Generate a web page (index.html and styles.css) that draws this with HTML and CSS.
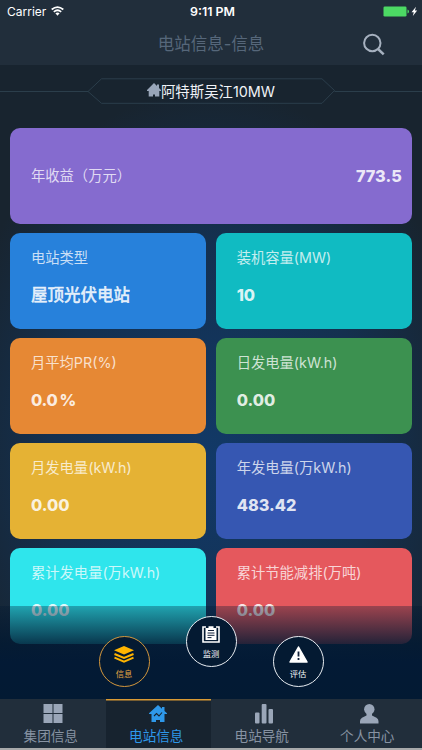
FILE: index.html
```
<!DOCTYPE html>
<html lang="zh-CN">
<head>
<meta charset="utf-8">
<meta name="viewport" content="width=device-width, initial-scale=1">
<title>电站信息</title>
<link rel="stylesheet" href="styles.css">
</head>
<body>
<div class="app">
  <header class="header">
    <div class="status">
      <div class="carrier">Carrier
        <svg width="13" height="10" viewBox="0 0 13 10"><g fill="none" stroke="#fff" stroke-width="1.7"><path d="M.7 3.5Q6.5-1.3 12.3 3.5"/><path d="M2.8 5.8Q6.5 2.7 10.2 5.8"/></g><path d="M4.4 7.3Q6.5 5.6 8.6 7.3L6.5 9.7z" fill="#fff"/></svg>
      </div>
      <div class="time">9:11 PM</div>
      <div class="power">
        <svg width="35" height="11" viewBox="0 0 35 11"><rect x=".5" y=".5" width="23" height="10" rx="1.3" fill="#4cd964"/><path d="M24.5 3.5q1.5.3 1.5 2t-1.5 2z" fill="#4cd964"/><path d="M33 .7l-4.5 5.6h2.3L29.8 10l4.4-5.4h-2.3z" fill="#fff"/></svg>
      </div>
    </div>
    <div class="titlebar">
      <h1>电站信息-信息</h1>
      <svg class="search" width="24" height="24" viewBox="0 0 24 24" fill="none" stroke="#a6b1bf"><circle cx="10.3" cy="10" r="8.2" stroke-width="2"/><path d="M16 16l5.7 5.3" stroke-width="2.5"/></svg>
    </div>
  </header>
  <main class="content">
    <div class="station">
      <svg class="frame" width="422" height="26" viewBox="0 0 422 26" fill="none" stroke="#2b3e4b"><path d="M0 13.5H88L101.5.8H322L334.500 12.500 322 25.300H101.500L88 13.500M334.500 13.500H422" stroke-width="1"/></svg>
      <svg class="home" width="14" height="14" viewBox="0 0 14 14" fill="#98a5b8"><path d="M7 0L0 7V8h1.700v5.500H6V11.500h2v2h4.300V8H14V7L12 5V1.500h-2V3z"/></svg>
      <span>阿特斯吴江10MW</span>
    </div>
    <section class="cards">
      <article class="card wide purple"><p>年收益（万元）</p><strong>773.5</strong></article>
      <article class="card blue"><p>电站类型</p><strong class="cn">屋顶光伏电站</strong></article>
      <article class="card teal"><p>装机容量(MW)</p><strong>10</strong></article>
      <article class="card orange"><p>月平均PR(%)</p><strong class="percent">0.0 %</strong></article>
      <article class="card green"><p>日发电量(kW.h)</p><strong>0.00</strong></article>
      <article class="card yellow"><p>月发电量(kW.h)</p><strong>0.00</strong></article>
      <article class="card indigo"><p>年发电量(万kW.h)</p><strong>483.42</strong></article>
      <article class="card cyan"><p>累计发电量(万kW.h)</p><strong>0.00</strong></article>
      <article class="card red"><p>累计节能减排(万吨)</p><strong>0.00</strong></article>
    </section>
  </main>
  <nav class="submenu">
    <a class="bubble active"><svg width="20" height="17" viewBox="0 0 20 17"><path d="M10 0l10 4.200L10 8.400 0 4.200z" fill="#ffb400"/><path d="M.5 8L10 12l9.500-4M.5 11.700L10 15.700l9.500-4" fill="none" stroke="#ffb400" stroke-width="1.900"/></svg><span>信息</span></a>
    <a class="bubble raised"><svg width="18" height="17" viewBox="0 0 18 17"><path d="M4 1H1v15h16V1h-3" fill="none" stroke="#fff" stroke-width="1.600"/><path d="M3.500 2h3V.300h5V2h3v12h-11z" fill="#fff"/><path d="M6 4.500h6M5.500 7h7M5.500 9.300h7M5.500 11.600h4" stroke="#10213a" stroke-width="1"/></svg><span>监测</span></a>
    <a class="bubble"><svg width="19" height="17" viewBox="0 0 19 17"><path d="M9.500 1L18 16H1z" fill="#fff" stroke="#fff" stroke-width="1.500" stroke-linejoin="round"/><path d="M9.500 5.500v5M9.500 12v2" stroke="#10213a" stroke-width="1.800"/></svg><span>评估</span></a>
  </nav>
  <nav class="tabs">
    <a class="tab"><svg width="20" height="20" viewBox="0 0 20 20" fill="#9aa6b8"><path d="M.5 0h9v9h-9zM10.500 0h9v9h-9zM.5 10h9v9h-9zM10.500 10h9v9h-9z"/></svg><span>集团信息</span></a>
    <a class="tab current"><svg width="20" height="20" viewBox="0 0 20 20"><path d="M10 1L1 9.300v.7h2.500v8H8v-2h4v2h4.500v-8H19v-.7l-2.500-2.300V3H14v1.700z" fill="#2e98ea"/><path d="M6 12l2.500-2.500 2.500 2.500L14 8.500" fill="none" stroke="#17232f" stroke-width="1.100"/></svg><span>电站信息</span></a>
    <a class="tab"><svg width="20" height="20" viewBox="0 0 20 20" fill="#9aa6b8"><rect x="1" y="8.500" width="4.500" height="11" rx="1"/><rect x="7.700" y="0" width="4.800" height="19.500" rx="1"/><rect x="14.500" y="5" width="4.500" height="14.500" rx="1"/></svg><span>电站导航</span></a>
    <a class="tab"><svg width="20" height="20" viewBox="0 0 20 20" fill="#9aa6b8"><circle cx="10.300" cy="5.300" r="5.200"/><path d="M7.500 9h5.500v2.500l4.500 2.200q2 1 2 3.500v2.300H1v-2.300q0-2.500 2-3.500l4.500-2.200z"/></svg><span>个人中心</span></a>
  </nav>
  <footer class="edge"></footer>
</div>
</body>
</html>
```
FILE: styles.css
```
* { box-sizing: border-box; }
body { margin: 0; font-family: Inter, "Noto Sans CJK SC", sans-serif; }
svg { display: block; flex: none; }
.app {
  position: relative;
  display: flex;
  flex-direction: column;
  width: 422px;
  height: 750px;
  overflow: hidden;
  background: radial-gradient(ellipse 270px 370px at 211px 460px, #123967 0%, #14304f 60%, #18242f 100%);
}
.header { height: 65px; flex: none; background: #212e3b; }
.status {
  display: grid;
  grid-template-columns: 1fr auto 1fr;
  align-items: center;
  height: 22px;
  padding: 0 4px 0 7px;
  color: #fff;
  font-size: 12px;
}
.carrier { display: flex; align-items: center; gap: 5px; }
.time { font-size: 12.4px; font-weight: 600; }
.power { display: flex; justify-content: flex-end; }
.titlebar { display: grid; grid-template-columns: 1fr auto 1fr; align-items: center; height: 43px; }
.titlebar h1 { grid-column: 2; margin: 0; color: #56677a; font-size: 16.5px; font-weight: 400; line-height: 24px; }
.search { margin: 2px 0 0 97.5px; }
.content { flex: none; height: 634px; }
.station {
  position: relative;
  display: flex;
  align-items: center;
  justify-content: center;
  height: 62.6px;
  padding-bottom: 12.6px;
  color: #f0f3f7;
  font-size: 14.4px;
}
.frame { position: absolute; left: 0; top: 13px; }
.cards { display: grid; grid-template-columns: 195.7px 195.7px; grid-auto-rows: 96px; gap: 9.2px 10px; padding: 0 10.4px; }
.card { border-radius: 10px; padding: 14px 20.6px 0; color: rgba(255,255,255,.86); white-space: nowrap; }
.card p { margin: 0; font-size: 14.3px; line-height: 22px; color: rgba(255,255,255,.76); }
.card strong { display: block; margin-top: 14px; font-size: 16.3px; font-weight: 800; line-height: 24px; }
.card .cn { font-size: 16.5px; font-weight: 500; -webkit-text-stroke: .35px rgba(255,255,255,.86); }
.card .percent { word-spacing: -1px; letter-spacing: -.3px; }
.wide { grid-column: 1 / 3; display: flex; align-items: center; justify-content: space-between; padding: 0 10px 0 20.6px; }
.card.wide strong { margin: 0; }
.purple { background: #856bcf; }
.blue { background: #2781db; }
.teal { background: #10bbc2; }
.orange { background: #e68834; }
.green { background: #3c9150; }
.yellow { background: #e5b234; }
.indigo { background: #3657b2; }
.cyan { background: #2fe5ec; }
.red { background: #e5585d; }
.submenu {
  position: absolute;
  left: 0;
  top: 606px;
  display: flex;
  justify-content: center;
  gap: 36px;
  width: 422px;
  height: 93px;
  padding-top: 30px;
  background: linear-gradient(rgba(2,24,48,.32), rgba(2,25,50,.84) 40%, #031a35 60%, #031a33);
}
.bubble {
  display: flex;
  flex-direction: column;
  align-items: center;
  width: 51px;
  height: 51px;
  padding-top: 9px;
  border: 1px solid #e9edf2;
  border-radius: 50%;
  background: #041a32;
  color: #f3f5f8;
  font-size: 8.3px;
}
.bubble span { margin-top: 6px; line-height: 11px; }
.raised { margin-top: -20px; }
.active { border-color: #d4973c; color: #e5a642; }
.tabs { display: grid; grid-template-columns: repeat(4, 1fr); height: 49px; flex: none; background: #212e3b; }
.tab { display: flex; flex-direction: column; align-items: center; padding-top: 5px; color: #8793a3; font-size: 13.6px; }
.tab span { margin: 2px 4px 0 0; line-height: 20px; }
.current { background: #17232f; box-shadow: inset 0 1.5px #d99a35; color: #2e98ea; }
.edge { height: 2px; flex: none; background: #a7a9aa; }
```
